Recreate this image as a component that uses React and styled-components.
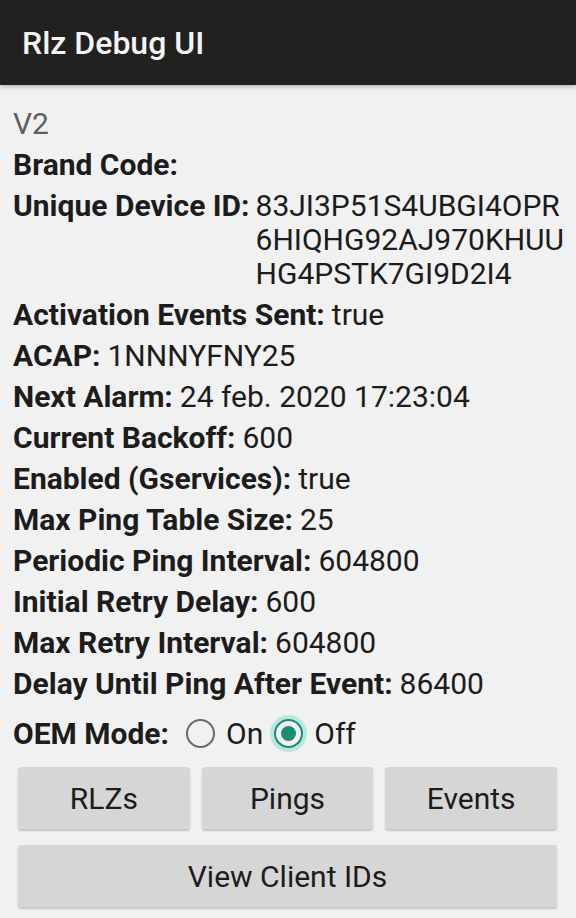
import React from "react";
import styled, { createGlobalStyle } from "styled-components";

const Global = createGlobalStyle`
  html, body { margin: 0; padding: 0; background: #f3f3f3; }
  body { font-family: Roboto, "Noto Sans", sans-serif; }
`;

const Screen = styled.div`
  width: 576px;
  height: 918px;
  background: #f1f1f1;
  display: flex;
  flex-direction: column;
  overflow: hidden;
`;

const AppBar = styled.header`
  height: 85px;
  flex: none;
  background: #212121;
  display: flex;
  align-items: center;
  padding-left: 22px;
  box-shadow: 0 2px 4px rgba(0, 0, 0, 0.25);
  position: relative;
  z-index: 1;
`;

const Title = styled.h1`
  margin: 0;
  color: #f4f4f4;
  font-size: 32px;
  font-weight: 500;
  letter-spacing: 0;
`;

const Content = styled.main`
  padding: 22px 10px 0 13px;
  display: flex;
  flex-direction: column;
  gap: 7px;
`;

const Version = styled.div`
  font-size: 30px;
  color: #5f5f5f;
  line-height: 34px;
`;

const Row = styled.div`
  display: flex;
  font-size: 30px;
  line-height: 34px;
  color: #1c1c1c;
`;

const Label = styled.span`
  font-weight: 700;
  white-space: nowrap;
  margin-right: ${(p) => (p.$tight ? "7px" : "6px")};
`;

const Value = styled.span`
  font-weight: 400;
  word-break: ${(p) => (p.$wrap ? "break-all" : "normal")};
  flex: ${(p) => (p.$wrap ? "1" : "none")};
`;

const RadioRow = styled.div`
  display: flex;
  align-items: center;
  font-size: 30px;
  color: #1c1c1c;
  margin-top: 5px;
  height: 40px;
`;

const RadioOption = styled.label`
  display: flex;
  align-items: center;
  gap: 11px;
  margin-left: ${(p) => p.$ml}px;
`;

const Circle = styled.span`
  width: 29px;
  height: 29px;
  border-radius: 50%;
  box-sizing: border-box;
  border: 2.5px solid ${(p) => (p.$on ? "#1b8a78" : "#6a6a6a")};
  display: flex;
  align-items: center;
  justify-content: center;
  box-shadow: ${(p) => (p.$on ? "0 0 0 4px rgba(130, 225, 205, 0.55)" : "none")};
  &::after {
    content: "";
    width: 15px;
    height: 15px;
    border-radius: 50%;
    background: ${(p) => (p.$on ? "#1b8a78" : "transparent")};
  }
`;

const ButtonGrid = styled.div`
  display: grid;
  grid-template-columns: repeat(3, 1fr);
  gap: 16px 12px;
  margin: 14px 19px 0 18px;
`;

const Button = styled.button`
  grid-column: ${(p) => (p.$full ? "1 / -1" : "auto")};
  height: 62px;
  border: none;
  border-radius: 3px;
  background: #d6d6d6;
  box-shadow: 0 2px 2px rgba(0, 0, 0, 0.18);
  font-family: Roboto, "Noto Sans", sans-serif;
  font-size: 30px;
  color: #1c1c1c;
  padding: 0;
`;

const rows = [
  ["Activation Events Sent:", "true"],
  ["ACAP:", "1NNNYFNY25"],
  ["Next Alarm:", "24 feb. 2020 17:23:04"],
  ["Current Backoff:", "600"],
  ["Enabled (Gservices):", "true"],
  ["Max Ping Table Size:", "25"],
  ["Periodic Ping Interval:", "604800"],
  ["Initial Retry Delay:", "600"],
  ["Max Retry Interval:", "604800"],
  ["Delay Until Ping After Event:", "86400"],
];

export default function App() {
  return (
    <>
      <Global />
      <Screen>
        <AppBar>
          <Title>Rlz Debug UI</Title>
        </AppBar>
        <Content>
          <Version>V2</Version>
          <Row>
            <Label>Brand Code:</Label>
          </Row>
          <Row>
            <Label>Unique Device ID:</Label>
            <Value $wrap>83JI3P51S4UBGI4OPR6HIQHG92AJ970KHUUHG4PSTK7GI9D2I4</Value>
          </Row>
          {rows.map(([l, v]) => (
            <Row key={l}>
              <Label $tight>{l}</Label>
              <Value>{v}</Value>
            </Row>
          ))}
          <RadioRow>
            <Label>OEM Mode:</Label>
            <RadioOption $ml={11}>
              <Circle />
              On
            </RadioOption>
            <RadioOption $ml={11}>
              <Circle $on />
              Off
            </RadioOption>
          </RadioRow>
        </Content>
        <ButtonGrid>
          <Button>RLZs</Button>
          <Button>Pings</Button>
          <Button>Events</Button>
          <Button $full>View Client IDs</Button>
        </ButtonGrid>
      </Screen>
    </>
  );
}
